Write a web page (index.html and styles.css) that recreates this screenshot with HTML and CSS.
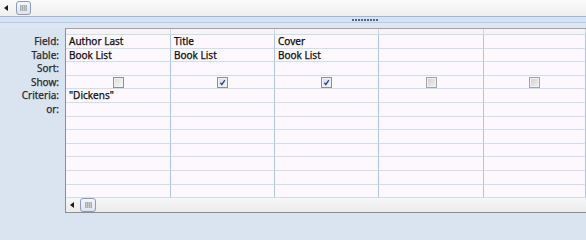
FILE: index.html
```html
<!DOCTYPE html>
<html>
<head>
<meta charset="utf-8">
<link rel="stylesheet" href="styles.css">
</head>
<body>
<div class="page">
  <div class="top-scroll">
    <span class="arrow-left"></span>
    <span class="thumb"><span class="grip-sq"></span></span>
  </div>
  <div class="splitter">
    <div class="split-line"></div>
    <div class="split-band"><span class="dots"></span></div>
  </div>
  <div class="main">
    <div class="labels">
      <div class="lab-row">Field:</div>
      <div class="lab-row">Table:</div>
      <div class="lab-row">Sort:</div>
      <div class="lab-row">Show:</div>
      <div class="lab-row">Criteria:</div>
      <div class="lab-row">or:</div>
    </div>
    <div class="grid-box">
      <div class="qbe">
        <div class="hd"></div><div class="hd"></div><div class="hd"></div><div class="hd"></div><div class="hd"></div>

        <div class="cell">Author Last</div><div class="cell">Title</div><div class="cell">Cover</div><div class="cell"></div><div class="cell"></div>
        <div class="cell">Book List</div><div class="cell">Book List</div><div class="cell">Book List</div><div class="cell"></div><div class="cell"></div>
        <div class="cell"></div><div class="cell"></div><div class="cell"></div><div class="cell"></div><div class="cell"></div>
        <div class="cell center"><span class="cb"></span></div>
        <div class="cell center"><span class="cb"><svg viewBox="0 0 10 10" class="tick"><path d="M2.6 5.2 L4.3 7.2 L7.6 2.4" /></svg></span></div>
        <div class="cell center"><span class="cb"><svg viewBox="0 0 10 10" class="tick"><path d="M2.6 5.2 L4.3 7.2 L7.6 2.4" /></svg></span></div>
        <div class="cell center"><span class="cb dim"></span></div>
        <div class="cell center"><span class="cb dim"></span></div>
        <div class="cell">"Dickens"</div><div class="cell"></div><div class="cell"></div><div class="cell"></div><div class="cell"></div>
        <div class="cell"></div><div class="cell"></div><div class="cell"></div><div class="cell"></div><div class="cell"></div>
        <div class="cell"></div><div class="cell"></div><div class="cell"></div><div class="cell"></div><div class="cell"></div>
        <div class="cell"></div><div class="cell"></div><div class="cell"></div><div class="cell"></div><div class="cell"></div>
        <div class="cell"></div><div class="cell"></div><div class="cell"></div><div class="cell"></div><div class="cell"></div>
        <div class="cell"></div><div class="cell"></div><div class="cell"></div><div class="cell"></div><div class="cell"></div>
        <div class="cell"></div><div class="cell"></div><div class="cell"></div><div class="cell"></div><div class="cell"></div>
        <div class="cell"></div><div class="cell"></div><div class="cell"></div><div class="cell"></div><div class="cell"></div>
      </div>
      <div class="hscroll">
        <span class="arrow-left"></span>
        <span class="thumb"><span class="grip-sq"></span></span>
      </div>
    </div>
  </div>
</div>
</body>
</html>
```

FILE: styles.css
```css
html, body {
  margin: 0;
  padding: 0;
  background: #dae4f1;
}
.page {
  width: 586px;
  height: 223px;
  overflow: hidden;
  font-family: "Noto Sans", "Open Sans", sans-serif;
  font-size: 10px;
  color: #0d0d0d;
  -webkit-text-stroke: 0.25px currentColor;
}
.top-scroll {
  height: 16px;
  box-sizing: border-box;
  background: linear-gradient(#fbfbfb, #efefef);
  display: flex;
  align-items: center;
  padding-left: 4px;
}
.arrow-left {
  width: 0;
  height: 0;
  border-top: 3px solid transparent;
  border-bottom: 3px solid transparent;
  border-right: 4px solid #1a1a1a;
}
.thumb {
  margin-left: 8px;
  width: 15px;
  height: 14px;
  box-sizing: border-box;
  border: 1px solid #8d9cb4;
  border-radius: 3px;
  background: linear-gradient(#f4f6fa, #dfe4ec);
  display: flex;
  align-items: center;
  justify-content: center;
}
.grip-sq {
  width: 7px;
  height: 6px;
  background: repeating-linear-gradient(90deg, #a9adb4 0 1px, #c6c9ce 1px 2px);
}
.splitter {
  height: 12px;
  display: flex;
  flex-direction: column;
}
.split-line {
  height: 1px;
  background: #9db7da;
}
.split-band {
  flex: 1;
  background: linear-gradient(#d6e2f2, #d6e2f2 5px, #b7cbe6 5px, #b7cbe6 6px, #dde6f3 6px);
  position: relative;
}
.dots {
  position: absolute;
  left: 352px;
  top: 2px;
  width: 27px;
  height: 2px;
  background: repeating-linear-gradient(90deg, #56657c 0 2px, transparent 2px 3px);
}
.main {
  display: flex;
  height: 195px;
}
.labels {
  width: 65px;
  flex: none;
  box-sizing: border-box;
  padding-top: 7px;
  padding-right: 6px;
  display: flex;
  flex-direction: column;
  color: #2a2a2a;
}
.lab-row {
  height: 13.6px;
  line-height: 13px;
  text-align: right;
}
.grid-box {
  flex: 1;
  height: 185px;
  box-sizing: border-box;
  border-top: 1px solid #a3a3a3;
  border-left: 1px solid #8e8e8e;
  border-bottom: 1px solid #8e8e8e;
  background: #fdf8fd;
  display: flex;
  flex-direction: column;
}
.qbe {
  display: grid;
  grid-template-columns: 105px 104px 104px 105px 1fr;
  grid-template-rows: 6px repeat(12, 13.6px);
}
.hd {
  box-sizing: border-box;
  border-right: 1px solid #c9d7e5;
  border-bottom: 1px solid #cfdcea;
  background: #f6f4f7;
}
.cell {
  box-sizing: border-box;
  border-right: 1px solid #aec7de;
  border-bottom: 1px solid #cfdeee;
  padding-left: 3px;
  line-height: 12.6px;
  white-space: nowrap;
  overflow: hidden;
}
.cell.center {
  display: flex;
  align-items: center;
  justify-content: center;
  padding-left: 0;
}
.cb {
  width: 11px;
  height: 11px;
  box-sizing: border-box;
  border: 1px solid #8e8f8f;
  background: linear-gradient(135deg, #dcdcdc, #f8f8f8);
  box-shadow: inset 0 0 0 1px #f2f2f2;
  display: flex;
}
.cb.dim {
  background: linear-gradient(135deg, #cfcfcf, #f2f2f2);
  border-color: #a4a4a4;
}
.tick {
  width: 9px;
  height: 9px;
}
.tick path {
  fill: none;
  stroke: #2b4ea8;
  stroke-width: 1.6;
}
.hscroll {
  flex: 1;
  background: linear-gradient(#f7f7f7, #ebebeb);
  display: flex;
  align-items: center;
  padding-left: 4px;
}
.hscroll .thumb {
  margin-left: 6px;
  width: 16px;
  height: 14px;
}
```
